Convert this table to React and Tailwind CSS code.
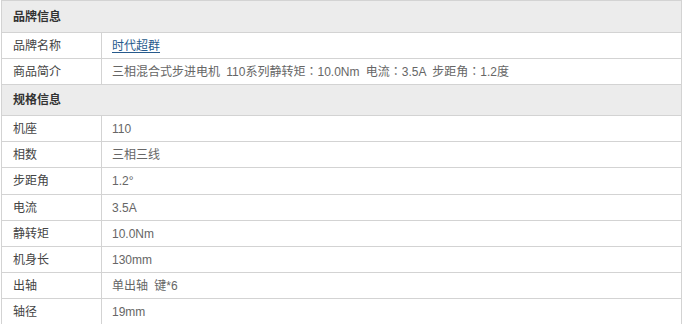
import React from "react";

const specs = [
  ["机座", "110"],
  ["相数", "三相三线"],
  ["步距角", "1.2°", true],
  ["电流", "3.5A"],
  ["静转矩", "10.0Nm"],
  ["机身长", "130mm"],
  ["出轴", "单出轴 键*6"],
  ["轴径", "19mm"],
];

// centred full-width colon, like the original page font
const Colon = () => <span style={{ fontFamily: '"Noto Sans CJK TC", sans-serif' }}>：</span>;

const Header = ({ title, tall }) => (
  <div
    className={
      (tall ? "h-[32px]" : "h-[31px]") +
      " flex items-center bg-[#ececec] border-b border-[#d3d3d3] pl-[11px] font-bold text-[#333]"
    }
  >
    {title}
  </div>
);

const Row = ({ label, tall, children }) => (
  <div className={(tall ? "h-[27px]" : "h-[26px]") + " flex border-b border-[#d3d3d3]"}>
    <div className="w-[100px] shrink-0 border-r border-[#d3d3d3] pl-[11px] flex items-center text-[#444]">
      {label}
    </div>
    <div className="pl-[10px] flex items-center text-[#666] whitespace-pre [word-spacing:3px]">{children}</div>
  </div>
);

const App = () => {
  return (
    <div
      className="bg-white w-[683px] h-[324px] overflow-hidden text-[12px] leading-none"
      style={{ fontFamily: '"Liberation Sans", "Noto Sans CJK SC", sans-serif' }}
    >
      <div className="ml-px w-[681px] border-t border-x border-[#d3d3d3]">
        <Header title="品牌信息" tall />
        <Row label="品牌名称">
          <a href="#" className="text-[#275a8c] underline underline-offset-2">时代超群</a>
        </Row>
        <Row label="商品简介">
          <span>
            三相混合式步进电机 110系列静转矩<Colon />10.0Nm 电流<Colon />3.5A 步距角<Colon />1.2度
          </span>
        </Row>
        <Header title="规格信息" />
        {specs.map(([k, v, tall]) => (
          <Row key={k} label={k} tall={tall}>{v}</Row>
        ))}
      </div>
    </div>
  );
};

export default App;
